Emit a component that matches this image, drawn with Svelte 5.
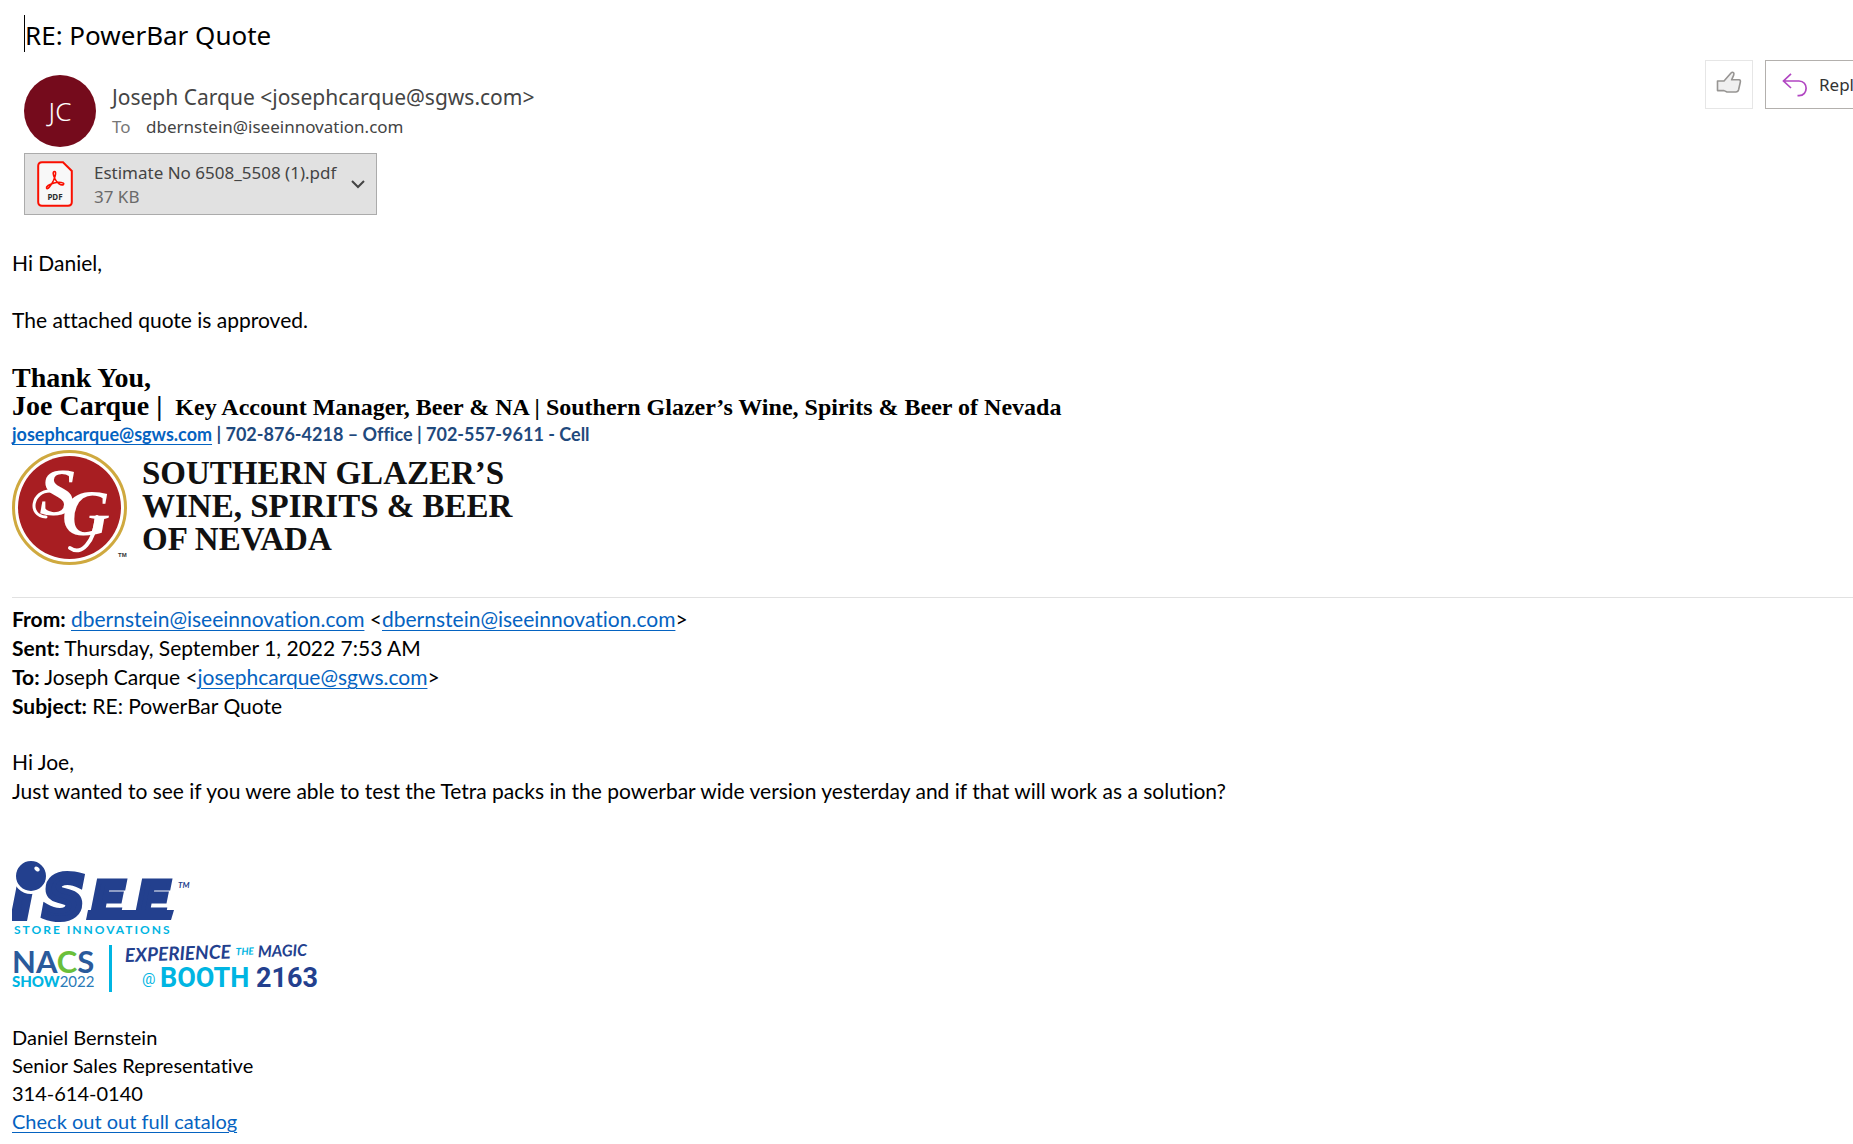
<script lang="ts">
  const sender = { name: "Joseph Carque", email: "josephcarque@sgws.com", initials: "JC" };
  const recipient = "dbernstein@iseeinnovation.com";
  const subject = "RE: PowerBar Quote";
  const attachment = { name: "Estimate No 6508_5508 (1).pdf", size: "37 KB" };
  const contact = ["Daniel Bernstein", "Senior Sales Representative", "314-614-0140"];
</script>

<main class="mail">
  <header class="mail-header">
    <h1 class="subject">{subject}</h1>

    <div class="sender-row">
      <div class="avatar">{sender.initials}</div>
      <div class="people">
        <div class="from">{sender.name} &lt;{sender.email}&gt;</div>
        <div class="to"><span class="to-label">To</span>{recipient}</div>
      </div>
      <div class="actions">
        <button class="action like" aria-label="Like">
          <svg width="26" height="24" viewBox="0 0 26 24">
            <path d="M1.5 10 H8 L15 2 Q16.5 .6 17.6 1.8 Q18.3 2.8 17.6 4.4 L15.6 8.8 H23 Q24.6 9 24.4 10.8 L22.6 18.8 Q22 21 19.8 21 H11 L8 19.6 H1.5 Z" fill="#f0f0f0" stroke="#979593" stroke-width="1.6" stroke-linejoin="round" />
          </svg>
        </button>
        <button class="action reply">
          <svg width="25" height="24" viewBox="0 0 25 24">
            <path d="M9 .8 L1.5 8 L9 15 M1.5 8 H17 C26.5 8 26.5 22.7 17 22.7 H15.5" fill="none" stroke="#b146c2" stroke-width="1.7" />
          </svg>
          Reply
        </button>
      </div>
    </div>

    <button class="attachment">
      <svg class="pdf" width="36" height="46" viewBox="0 0 36 46">
        <path d="M5 1.2 H26 L34.8 10 V41 Q34.8 44.8 31 44.8 H5 Q1.2 44.8 1.2 41 V5 Q1.2 1.2 5 1.2 Z" fill="#f8f8f8" stroke="#fa0f00" stroke-width="2" />
        <path d="M17.5 10.5 C15.5 10.5 16 14 18 18 C20 22 24 25 26.5 23.5 C28 21.5 22 20.5 17 22 C12 23.5 9 25.5 9.5 27 C10.5 29.5 14 24.5 16.5 19.5 C18.5 15 19.5 10.5 17.5 10.5 Z" fill="none" stroke="#fa0f00" stroke-width="1.6" />
        <text x="18" y="39" text-anchor="middle" font-size="8" font-weight="bold" fill="#2c2c2c">PDF</text>
      </svg>
      <span class="file">
        <span class="file-name">{attachment.name}</span>
        <span class="file-size">{attachment.size}</span>
      </span>
      <svg width="14" height="9" viewBox="0 0 14 9">
        <path d="M1 1 L7 7 L13 1" fill="none" stroke="#444" stroke-width="2" />
      </svg>
    </button>
  </header>

  <article class="body">
    <p>Hi Daniel,</p>
    <p>The attached quote is approved.</p>

    <div class="signature">
      <div class="sig-name">Thank You,</div>
      <div class="sig-name">
        Joe Carque | <span class="sig-title">Key Account Manager, Beer &amp; NA | Southern Glazer’s Wine, Spirits &amp; Beer of Nevada</span>
      </div>
      <div class="sig-contact">
        <a href="mailto:{sender.email}">{sender.email}</a> | 702-876-4218 – Office | 702-557-9611 - Cell
      </div>
    </div>

    <svg class="sg-logo" width="510" height="118" viewBox="0 0 510 118">
      <circle cx="57.5" cy="58.5" r="56" fill="#fff" stroke="#cfa93f" stroke-width="3" />
      <circle cx="57.5" cy="58.5" r="51.5" fill="#a81e22" />
      <g fill="#fff" font-family="'Liberation Serif', serif" font-style="italic" font-weight="bold">
        <text x="27" y="66" font-size="68">S</text>
        <text x="50" y="86" font-size="66">G</text>
      </g>
      <!-- swashes that close the monogram -->
      <path d="M39 42 C20 41 15 67 34 68" fill="none" stroke="#fff" stroke-width="3" stroke-linecap="round" />
      <path d="M85 68 C82 94 69 107 58 99" fill="none" stroke="#fff" stroke-width="4" stroke-linecap="round" />
      <text x="106" y="108" font-size="6" font-weight="bold" font-family="'Liberation Sans', sans-serif" fill="#333">TM</text>
      <g fill="#111" font-family="'Liberation Serif', serif" font-weight="bold" font-size="33">
        <text x="130" y="35">SOUTHERN GLAZER’S</text>
        <text x="130" y="68">WINE, SPIRITS &amp; BEER</text>
        <text x="130" y="101">OF NEVADA</text>
      </g>
    </svg>

    <section class="quoted">
      <div class="meta">
        <div><b>From:</b> <a href="mailto:{recipient}">{recipient}</a> &lt;<a href="mailto:{recipient}">{recipient}</a>&gt;</div>
        <div><b>Sent:</b> Thursday, September 1, 2022 7:53 AM</div>
        <div><b>To:</b> {sender.name} &lt;<a href="mailto:{sender.email}">{sender.email}</a>&gt;</div>
        <div><b>Subject:</b> {subject}</div>
      </div>
      <div class="reply-text">
        <div>Hi Joe,</div>
        <div>Just wanted to see if you were able to test the Tetra packs in the powerbar wide version yesterday and if that will work as a solution?</div>
      </div>

      <svg class="isee-logo" width="320" height="140" viewBox="0 0 320 140">
        <g fill="#23408e" stroke="#23408e" font-family="'DejaVu Sans', sans-serif" font-weight="bold" font-style="italic">
          <text x="1" y="61" font-size="52" stroke-width="8">i</text>
          <circle cx="19" cy="20" r="16.5" stroke="#fff" stroke-width="3" />
          <text x="31" y="62" font-size="58" stroke-width="6">S</text>
          <text x="79" y="61" font-size="50" stroke-width="5">E</text>
          <text x="124" y="61" font-size="50" stroke-width="5">E</text>
        </g>
        <!-- underline joining the last letters -->
        <path d="M76 54 H162 L159 64 H74 Z" fill="#23408e" />
        <ellipse cx="25" cy="13" rx="3" ry="2" fill="#fff" transform="rotate(35 25 13)" />
        <text x="166" y="32" font-size="8" font-weight="bold" font-style="italic" fill="#23408e">TM</text>
        <text class="tagline" x="2" y="78" font-size="12" font-weight="bold" fill="#00b5e2">STORE INNOVATIONS</text>

        <text x="0" y="117" font-size="31" font-weight="bold" fill="#2a5a9b">NA<tspan fill="#6bbf3a">C</tspan>S</text>
        <text x="0" y="131" font-size="15" font-weight="900" fill="#00b5e2">SHOW<tspan font-weight="400" fill="#2a7ab8">2022</tspan></text>
        <rect x="97" y="89" width="3" height="47" fill="#00b5e2" />
        <g font-family="Lato, sans-serif" font-weight="bold" font-style="italic" font-size="16" fill="#23408e" transform="rotate(-2 113 106)">
          <text x="113" y="106" font-size="19">EXPERIENCE</text>
          <text x="224" y="103" font-size="10" fill="#00b5e2">THE</text>
          <text x="246" y="106">MAGIC</text>
        </g>
        <g font-family="Roboto, sans-serif" font-weight="bold" font-size="27">
          <text x="130" y="128" font-size="15" font-weight="400" fill="#00b5e2">@</text>
          <text x="148" y="131" fill="#00b5e2">BOOTH</text>
          <text x="244" y="131" fill="#23408e">2163</text>
        </g>
      </svg>

      <address class="contact">
        {#each contact as line}
          <div>{line}</div>
        {/each}
        <a href="#catalog">Check out out full catalog</a>
      </address>
    </section>
  </article>
</main>

<style>
  :global(body) {
    margin: 0;
    background: #fff;
  }
  .mail {
    font-family: "Noto Sans", sans-serif;
    color: #000;
    overflow: hidden;
  }

  /* header */
  .mail-header {
    padding: 15px 0 0 24px;
  }
  .subject {
    margin: 0;
    padding-top: 4px;
    border-left: 1px solid #000;
    font-size: 26px;
    font-weight: 400;
    line-height: 33px;
  }
  .sender-row {
    display: flex;
    margin-top: 8px;
    height: 87px;
  }
  .avatar {
    width: 72px;
    height: 72px;
    margin-top: 15px;
    border-radius: 50%;
    background: #750b1c;
    color: #fff;
    font-size: 26px;
    font-weight: 300;
    line-height: 72px;
    text-align: center;
  }
  .people {
    margin: 21px 0 0 16px;
    color: #444;
    white-space: nowrap;
  }
  .from {
    font-size: 21px;
    line-height: 32px;
  }
  .to {
    font-size: 17px;
    line-height: 28px;
  }
  .to-label {
    display: inline-block;
    width: 34px;
    color: #777;
  }
  .actions {
    display: flex;
    gap: 12px;
    width: 148px;
    margin-left: auto;
    overflow: hidden;
  }
  .action {
    display: flex;
    flex: none;
    align-items: center;
    height: 49px;
    border: 1px solid #e6e6e6;
    background: #fff;
    color: #333;
    font-family: inherit;
    font-size: 17px;
  }
  .like {
    justify-content: center;
    width: 48px;
    padding: 0 0 3px;
  }
  .reply {
    gap: 12px;
    padding: 0 16px;
    border-color: #b3b0ad;
  }
  .attachment {
    display: flex;
    align-items: center;
    width: 353px;
    height: 62px;
    margin-top: 6px;
    padding: 0 11px 0 12px;
    border: 1px solid #ababab;
    background: #e1e1e1;
    color: #444;
    font-family: inherit;
    font-size: 17px;
    line-height: 24px;
    text-align: left;
  }
  .file {
    flex: 1;
    margin-left: 21px;
    padding-top: 2px;
    white-space: nowrap;
  }
  .file-name,
  .file-size {
    display: block;
  }
  .file-size {
    color: #6a6a6a;
  }

  /* message */
  .body {
    padding: 34px 0 8px 12px;
    font-family: Lato, sans-serif;
    font-size: 21px;
    font-variant-ligatures: none;
    line-height: 28px;
  }
  .body p {
    margin: 0 0 29px;
  }
  .body a {
    color: #0563c1;
    text-underline-offset: 3px;
    text-decoration-thickness: 1px;
  }
  .body svg {
    display: block;
  }
  .signature {
    padding: 1px 0;
  }
  .sig-name {
    font-family: "Liberation Serif", serif;
    font-size: 28px;
    font-weight: bold;
  }
  .sig-title {
    margin-left: 6px;
    font-size: 24px;
  }
  .sig-contact {
    color: #1f497d;
    font-size: 18px;
    font-weight: bold;
    line-height: 27px;
  }
  .sg-logo {
    margin-bottom: 30px;
  }
  .quoted {
    padding-top: 6px;
    border-top: 1px solid #e1e1e1;
  }
  .meta,
  .reply-text {
    line-height: 29px;
  }
  .reply-text {
    margin: 27px 0 51px;
  }
  .tagline {
    letter-spacing: 2px;
  }
  .contact {
    margin-top: 27px;
    font-size: 20px;
    font-style: normal;
  }
</style>
